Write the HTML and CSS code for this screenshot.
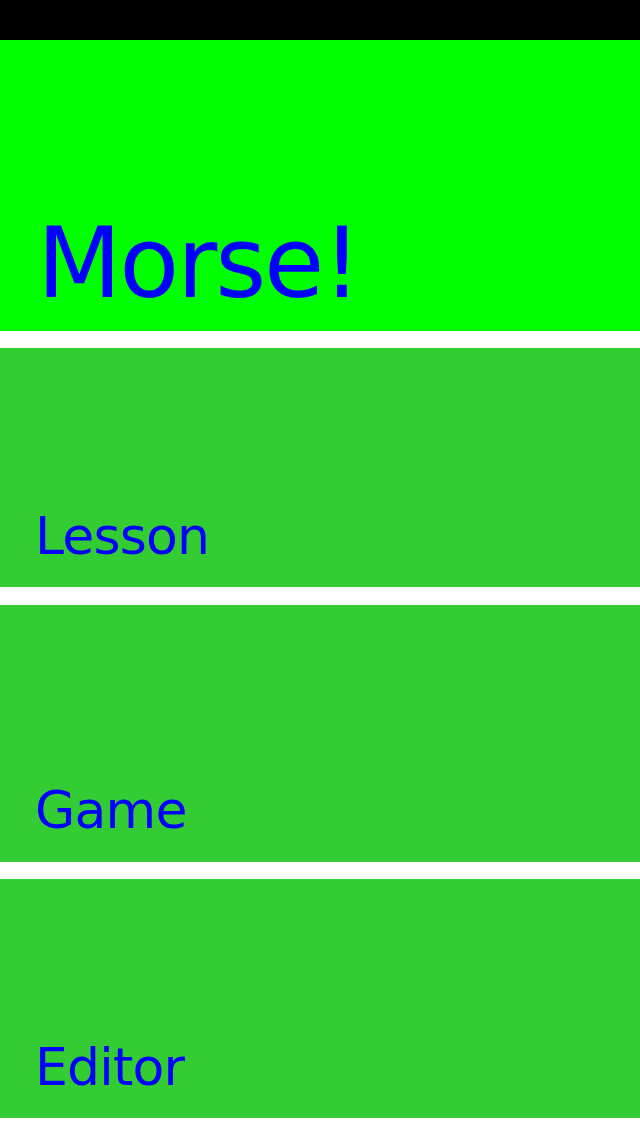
FILE: index.html
```html
<!DOCTYPE html>
<html>
<head>
<meta charset="utf-8">
<title>Morse!</title>
<link rel="stylesheet" href="styles.css">
</head>
<body>
<div class="status-bar"></div>
<main class="menu">
  <header class="title-panel"><h1 class="title">Morse!</h1></header>
  <a class="menu-item item-short">Lesson</a>
  <a class="menu-item item-tall">Game</a>
  <a class="menu-item item-short">Editor</a>
</main>
</body>
</html>
```
FILE: styles.css
```css
html, body {
  margin: 0;
  padding: 0;
  background: #ffffff;
  width: 640px;
  height: 1136px;
  overflow: hidden;
  font-family: "DejaVu Sans", "Liberation Sans", sans-serif;
}

.status-bar {
  height: 40px;
  background: #000000;
}

.menu {
  display: flex;
  flex-direction: column;
  gap: 17.2px;
}

.title-panel {
  height: 290.7px;
  background: #00ff00;
  display: flex;
  align-items: flex-end;
  padding: 0 0 11px 37px;
  box-sizing: border-box;
}

.title {
  margin: 0;
  font-weight: normal;
  font-size: 98px;
  line-height: normal;
  letter-spacing: -2.2px;
  color: #0000ff;
}

.menu-item {
  display: flex;
  align-items: flex-end;
  background: #33cc33;
  color: #0000ff;
  font-size: 52px;
  line-height: normal;
  letter-spacing: -0.8px;
  padding: 0 0 21.5px 35px;
  box-sizing: border-box;
}

.item-short {
  height: 239.6px;
}

.item-tall {
  height: 257px;
}
```
